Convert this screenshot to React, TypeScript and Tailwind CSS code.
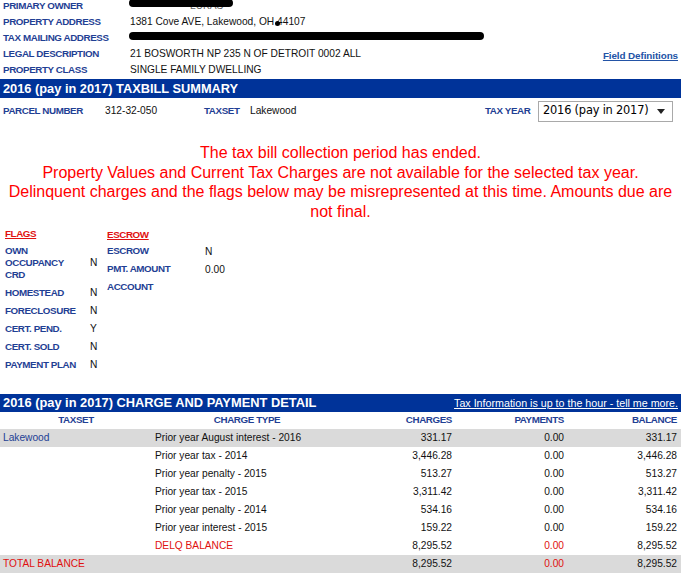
import React from "react";

const LABEL = "font-bold text-[9.8px] text-[#1f3f94] tracking-[-0.4px]";
const VALUE = "text-[10.2px] text-[#111]";

const infoRows: { label: string; value: React.ReactNode; right?: React.ReactNode }[] = [
  {
    label: "PRIMARY OWNER",
    value: (
      <span className="relative inline-block">
        <span className="pl-[60px] text-[#666]">LUKAS</span>
        <span className="absolute left-[-1px] top-[1px] h-[8px] w-[104px] rounded-full bg-black" />
      </span>
    ),
  },
  {
    label: "PROPERTY ADDRESS",
    value: (
      <span className="relative inline-block">
        1381 Cove AVE, Lakewood, OH 44107
        <span className="absolute left-[145px] top-[7px] h-[5px] w-[5px] rounded-full bg-black" />
      </span>
    ),
  },
  {
    label: "TAX MAILING ADDRESS",
    value: (
      <span className="relative inline-block h-[12px] w-[356px]">
        <span className="absolute left-[-1px] top-[2px] h-[8px] w-[355px] rounded-full bg-black" />
      </span>
    ),
  },
  {
    label: "LEGAL DESCRIPTION",
    value: "21 BOSWORTH NP 235 N OF DETROIT 0002 ALL",
    right: (
      <a className="font-bold text-[9.9px] tracking-[-0.1px] text-[#2353a6] underline">Field Definitions</a>
    ),
  },
  { label: "PROPERTY CLASS", value: "SINGLE FAMILY DWELLING" },
];

const flags: [string, string][] = [
  ["OWN OCCUPANCY CRD", "N"],
  ["HOMESTEAD", "N"],
  ["FORECLOSURE", "N"],
  ["CERT. PEND.", "Y"],
  ["CERT. SOLD", "N"],
  ["PAYMENT PLAN", "N"],
];

const escrow: [string, string][] = [
  ["ESCROW", "N"],
  ["PMT. AMOUNT", "0.00"],
  ["ACCOUNT", ""],
];

const charges: [string, string, string, string][] = [
  ["Prior year August interest - 2016", "331.17", "0.00", "331.17"],
  ["Prior year tax - 2014", "3,446.28", "0.00", "3,446.28"],
  ["Prior year penalty - 2015", "513.27", "0.00", "513.27"],
  ["Prior year tax - 2015", "3,311.42", "0.00", "3,311.42"],
  ["Prior year penalty - 2014", "534.16", "0.00", "534.16"],
  ["Prior year interest - 2015", "159.22", "0.00", "159.22"],
];

const COLS = "grid grid-cols-[152px_190px_113px_112px_113px] items-center";

export default function App() {
  return (
    <div className="w-[681px] bg-white font-['Liberation_Sans',Arial,sans-serif]">
      {/* property info */}
      <div className="mt-[-2px] mb-px">
        {infoRows.map((r) => (
          <div key={r.label} className="flex h-4 items-center">
            <div className={`w-[130px] pl-[3px] ${LABEL}`}>{r.label}</div>
            <div className={`flex-1 ${VALUE}`}>{r.value}</div>
            {r.right && <div className="pr-[3px]">{r.right}</div>}
          </div>
        ))}
      </div>

      <div className="flex h-[19px] items-center bg-[#003399] px-[3px] text-[12.8px] font-bold text-white">
        2016 (pay in 2017) TAXBILL SUMMARY
      </div>

      <div className="flex h-[26px] items-center">
        <div className={`w-[105px] pl-[3px] ${LABEL}`}>PARCEL NUMBER</div>
        <div className={`w-[99px] ${VALUE}`}>312-32-050</div>
        <div className={`w-[46px] ${LABEL}`}>TAXSET</div>
        <div className={VALUE}>Lakewood</div>
        <div className="flex-1" />
        <div className={`w-[53px] ${LABEL}`}>TAX YEAR</div>
        <div className="mr-[8px] flex h-[21px] w-[135px] items-center border border-[#a9a9a9] bg-white pl-[4px] pr-[7px] font-['DejaVu_Sans',Tahoma,sans-serif] text-[11.4px] tracking-[-0.2px] text-black">
          <span className="flex-1">2016 (pay in 2017)</span>
          <svg width="8" height="5" viewBox="0 0 8 5">
            <path d="M0 0h8L4 5z" fill="#222" />
          </svg>
        </div>
      </div>

      <div className="mt-[19px] whitespace-nowrap text-center text-[16px] leading-[19.7px] text-[#f00]">
        The tax bill collection period has ended.
        <br />
        Property Values and Current Tax Charges are not available for the selected tax year.
        <br />
        Delinquent charges and the flags below may be misrepresented at this time. Amounts due are
        <br />
        not final.
      </div>

      {/* flags & escrow */}
      <div className="mt-[6px] flex">
        <div className="w-[107px] pl-[5px]">
          <div className="flex h-[14px] items-center">
            <span className="text-[9.8px] font-bold tracking-[-0.4px] text-[#e01010] underline">FLAGS</span>
          </div>
          {flags.map(([k, v]) => (
            <div key={k} className="grid grid-cols-[85px_17px] items-center py-[3px]">
              <div className={`max-w-[74px] leading-[12px] ${LABEL}`}>{k}</div>
              <div className={`leading-[12px] ${VALUE}`}>{v}</div>
            </div>
          ))}
        </div>
        <div>
          <div className="flex h-[15px] items-center">
            <span className="text-[9.8px] font-bold tracking-[-0.4px] text-[#e01010] underline">ESCROW</span>
          </div>
          {escrow.map(([k, v]) => (
            <div key={k} className="grid h-[18px] grid-cols-[98px_auto] items-center">
              <div className={LABEL}>{k}</div>
              <div className={VALUE}>{v}</div>
            </div>
          ))}
        </div>
      </div>

      {/* charge detail */}
      <div className="mt-[20px] flex h-[18px] items-center justify-between bg-[#003399] px-[3px] text-white">
        <span className="text-[12.85px] font-bold">2016 (pay in 2017) CHARGE AND PAYMENT DETAIL</span>
        <a className="text-[10.7px] underline">Tax Information is up to the hour - tell me more.</a>
      </div>

      <div className={`${COLS} h-[17px] ${LABEL}`}>
        <div className="text-center">TAXSET</div>
        <div className="text-center">CHARGE TYPE</div>
        <div className="pr-[3px] text-right">CHARGES</div>
        <div className="pr-[3px] text-right">PAYMENTS</div>
        <div className="pr-[3px] text-right">BALANCE</div>
      </div>

      {charges.map(([type, c, p, b], i) => (
        <div key={type} className={`${COLS} h-[18px] ${VALUE} ${i === 0 ? "bg-[#dadada]" : ""}`}>
          <div className="pl-[3px] text-[#1f3f94]">{i === 0 ? "Lakewood" : ""}</div>
          <div className="pl-[3px]">{type}</div>
          <div className="pr-[3px] text-right">{c}</div>
          <div className="pr-[3px] text-right">{p}</div>
          <div className="pr-[3px] text-right">{b}</div>
        </div>
      ))}

      <div className={`${COLS} h-[18px] ${VALUE}`}>
        <div />
        <div className="pl-[3px] text-[#e01010]">DELQ BALANCE</div>
        <div className="pr-[3px] text-right">8,295.52</div>
        <div className="pr-[3px] text-right text-[#e01010]">0.00</div>
        <div className="pr-[3px] text-right">8,295.52</div>
      </div>
      <div className={`${COLS} h-[18px] bg-[#dadada] ${VALUE}`}>
        <div className="pl-[3px] text-[#e01010]">TOTAL BALANCE</div>
        <div />
        <div className="pr-[3px] text-right">8,295.52</div>
        <div className="pr-[3px] text-right text-[#e01010]">0.00</div>
        <div className="pr-[3px] text-right">8,295.52</div>
      </div>
    </div>
  );
}
